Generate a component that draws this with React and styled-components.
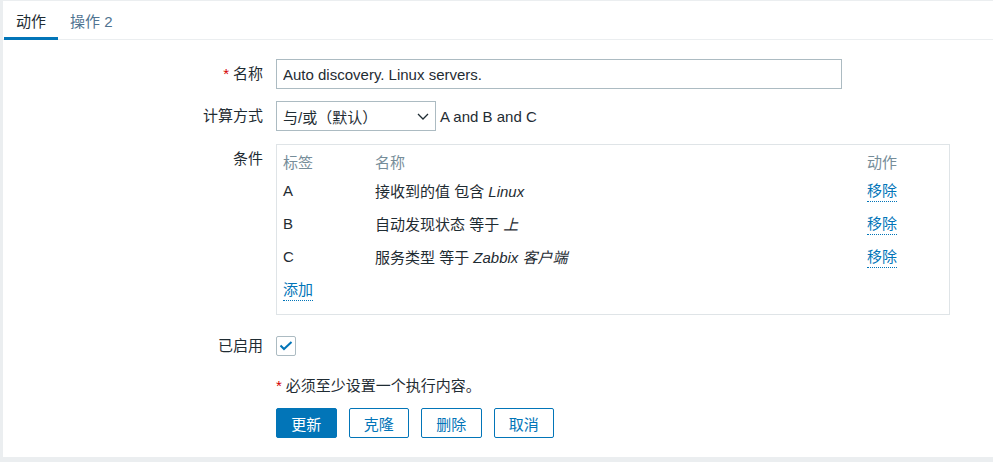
import React from "react";
import styled, { createGlobalStyle } from "styled-components";

const GlobalStyle = createGlobalStyle`
  html, body {
    margin: 0;
    padding: 0;
    background: #ebeef0;
  }
  body {
    font-family: "Liberation Sans", Arial, "Noto Sans CJK SC", sans-serif;
    font-size: 15px;
    color: #1f2c33;
    -webkit-font-smoothing: antialiased;
  }
  #root {
    padding: 1px 0 0 3px;
  }
`;

const conditions = [
  { label: "A", name: "接收到的值 包含 ", value: "Linux" },
  { label: "B", name: "自动发现状态 等于 ", value: "上" },
  { label: "C", name: "服务类型 等于 ", value: "Zabbix 客户端" },
];

// White page panel
const Panel = styled.div`
  background: #fff;
  height: 456px;
  box-sizing: border-box;
`;

// Tab strip
const TabBar = styled.div`
  display: flex;
  height: 38px;
  padding-left: 1px;
  border-bottom: 1px solid #ebeef0;
`;

const Tab = styled.div`
  height: 39px;
  margin-bottom: -1px;
  box-sizing: border-box;
  padding: 3px 12px 0;
  display: flex;
  align-items: center;
  color: ${(p) => (p.$active ? "#1f2c33" : "#4f7391")};
  border-bottom: 3px solid ${(p) => (p.$active ? "#0275b8" : "transparent")};
  cursor: pointer;
`;

// Form
const Form = styled.div`
  padding-top: 19px;
  display: flex;
  flex-direction: column;
`;

const Row = styled.div`
  display: grid;
  grid-template-columns: 260px 1fr;
  column-gap: 13px;
  margin-top: ${(p) => p.$top || 0}px;
  align-items: ${(p) => (p.$alignTop ? "start" : "center")};
`;

const Label = styled.div`
  height: 30px;
  line-height: 30px;
  text-align: right;
  white-space: nowrap;
`;

const Star = styled.span`
  color: #d40000;
  margin-right: 4px;
`;

const Field = styled.div`
  display: flex;
  align-items: center;
`;

const TextInput = styled.input`
  width: 566px;
  height: 30px;
  box-sizing: border-box;
  border: 1px solid #acbbc2;
  padding: 0 6px;
  font: inherit;
  color: #1f2c33;
  outline: none;
`;

const Select = styled.div`
  width: 160px;
  height: 30px;
  box-sizing: border-box;
  border: 1px solid #acbbc2;
  padding: 0 6px;
  display: flex;
  align-items: center;
  justify-content: space-between;
`;

const Expr = styled.span`
  margin-left: 4px;
`;

// Conditions table
const CondBox = styled.div`
  width: 674px;
  box-sizing: border-box;
  border: 1px solid #dfe4e7;
  padding: 4px 6px 8px;
  display: grid;
  grid-template-columns: 92px 492px 76px;
  grid-template-rows: 25px;
  grid-auto-rows: 33px;
  align-items: center;
`;

const Th = styled.div`
  color: #768d99;
`;

const Italic = styled.i`
  font-style: italic;
`;

const Link = styled.span`
  color: #0275b8;
  border-bottom: 1px dotted #0275b8;
  padding-bottom: 1px;
  cursor: pointer;
  justify-self: start;
`;

const Check = styled.div`
  width: 20px;
  height: 20px;
  box-sizing: border-box;
  border: 1px solid #acbbc2;
  border-radius: 2px;
  display: flex;
  align-items: center;
  justify-content: center;
`;

const Note = styled.div`
  line-height: 30px;
`;

const Buttons = styled.div`
  display: flex;
  gap: 12px;
`;

const Button = styled.button`
  width: 60.5px;
  height: 30px;
  box-sizing: border-box;
  border-radius: 2px;
  border: 1px solid #0275b8;
  background: ${(p) => (p.$primary ? "#0275b8" : "#fff")};
  color: ${(p) => (p.$primary ? "#fff" : "#0275b8")};
  font: inherit;
  padding: 0;
  cursor: pointer;
`;

const Chevron = () => (
  <svg width="12" height="7" viewBox="0 0 12 7">
    <polyline points="1,1 6,6 11,1" fill="none" stroke="#1f2c33" strokeWidth="1.3" />
  </svg>
);

const Tick = () => (
  <svg width="14" height="10" viewBox="0 0 14 10">
    <polyline points="1.5,4.5 5,8 12.5,1" fill="none" stroke="#0275b8" strokeWidth="2" />
  </svg>
);

const App = () => {
  return (
    <>
      <GlobalStyle />
      <Panel>
        <TabBar>
          <Tab $active>动作</Tab>
          <Tab>操作 2</Tab>
        </TabBar>
        <Form>
          <Row>
            <Label>
              <Star>*</Star>名称
            </Label>
            <Field>
              <TextInput defaultValue="Auto discovery. Linux servers." />
            </Field>
          </Row>
          <Row $top={12}>
            <Label>计算方式</Label>
            <Field>
              <Select>
                <span>与/或（默认）</span>
                <Chevron />
              </Select>
              <Expr>A and B and C</Expr>
            </Field>
          </Row>
          <Row $top={13} $alignTop>
            <Label>条件</Label>
            <CondBox>
              <Th>标签</Th>
              <Th>名称</Th>
              <Th>动作</Th>
              {conditions.map((c) => (
                <React.Fragment key={c.label}>
                  <div>{c.label}</div>
                  <div>
                    {c.name}
                    <Italic>{c.value}</Italic>
                  </div>
                  <Link>移除</Link>
                </React.Fragment>
              ))}
              <Link>添加</Link>
            </CondBox>
          </Row>
          <Row $top={16}>
            <Label>已启用</Label>
            <Field>
              <Check>
                <Tick />
              </Check>
            </Field>
          </Row>
          <Row $top={10}>
            <div />
            <Note>
              <Star>*</Star>必须至少设置一个执行内容。
            </Note>
          </Row>
          <Row $top={7}>
            <div />
            <Buttons>
              <Button $primary>更新</Button>
              <Button>克隆</Button>
              <Button>删除</Button>
              <Button>取消</Button>
            </Buttons>
          </Row>
        </Form>
      </Panel>
    </>
  );
};

export default App;
